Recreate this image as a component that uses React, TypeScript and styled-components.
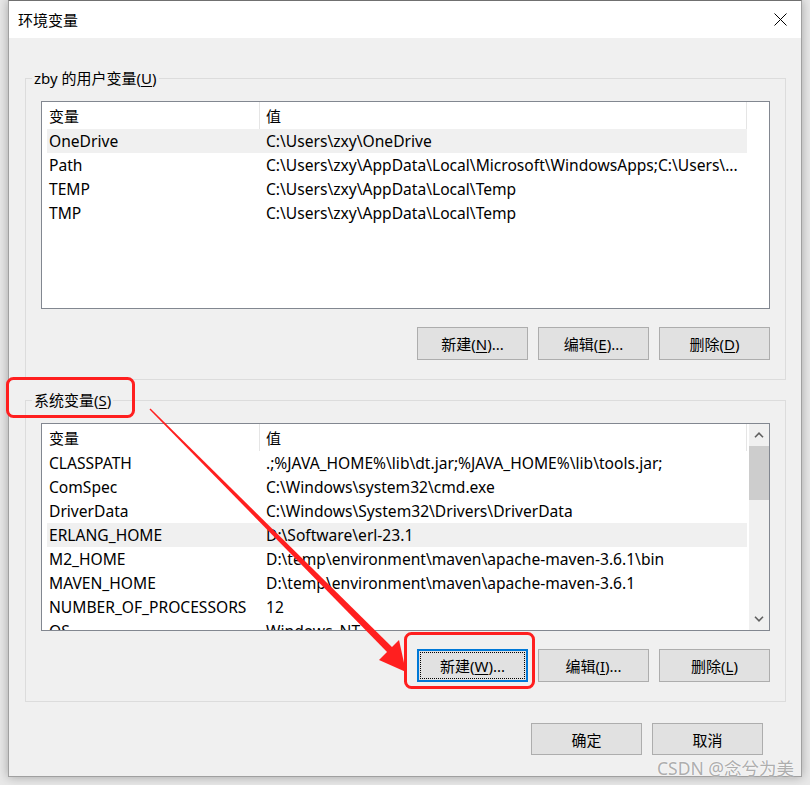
import * as React from "react";
import styled, { createGlobalStyle } from "styled-components";

const GlobalStyle = createGlobalStyle`
  body {
    margin: 0;
    font-family: "Noto Sans", "Noto Sans CJK SC", sans-serif;
    font-size: 15px;
    color: #000;
  }
  * {
    box-sizing: border-box;
  }
`;

const Screen = styled.div`
  position: relative;
  width: 810px;
  height: 785px;
  overflow: hidden;
  background: #e8e8e8;
  display: flex;
  padding-left: 8px;
`;

const Dialog = styled.div`
  width: 794px;
  height: 777px;
  background: #f0f0f0;
  border: 1px solid #a0a0a0;
  border-top-color: #707070;
  box-shadow: 0 0 10px rgba(0, 0, 0, 0.3);
  display: flex;
  flex-direction: column;
`;

const TitleBar = styled.div`
  height: 37px;
  background: #fff;
  display: flex;
  align-items: center;
  justify-content: space-between;
  padding-left: 9px;
  font-family: "Noto Sans CJK SC", sans-serif;
`;

const CloseButton = styled.div`
  width: 42px;
  height: 37px;
  display: flex;
  align-items: center;
  justify-content: center;
`;

const Body = styled.div`
  padding: 30px 15px 0 16px;
  display: flex;
  flex-direction: column;
`;

const GroupBox = styled.fieldset<{ $gap?: number }>`
  margin: ${(p) => p.$gap ?? 0}px 0 0;
  border: 1px solid #dcdcdc;
  padding: 13px 6px 19px;
  min-width: 0;
`;

const Legend = styled.legend`
  padding: 0 2px;
  line-height: 20px;
`;

const GroupInner = styled.div`
  padding: 0 9px;
  display: flex;
  flex-direction: column;
`;

const Key = styled.span`
  text-decoration: underline;
  text-underline-offset: 2px;
`;

const ListView = styled.div`
  height: 208px;
  border: 1px solid #828790;
  background: #fff;
  display: flex;
  overflow: hidden;
`;

const ListBody = styled.div`
  flex: 1;
  padding-left: 5px;
  display: flex;
  flex-direction: column;
  overflow: hidden;
`;

const HeaderRow = styled.div`
  height: 27px;
  flex: none;
  display: flex;
`;

const HeaderCell = styled.div<{ $w: number; $pad: number }>`
  width: ${(p) => p.$w}px;
  padding-left: ${(p) => p.$pad}px;
  border-right: 1px solid #e5e5e5;
  display: flex;
  align-items: center;
  font-family: "Noto Sans CJK SC", sans-serif;
`;

const Row = styled.div<{ $selected?: boolean }>`
  height: 24px;
  flex: none;
  width: 700px;
  display: flex;
  align-items: center;
  font-size: 15.6px;
  background: ${(p) => (p.$selected ? "#f0f0f0" : "transparent")};
  white-space: nowrap;
`;

const Cell = styled.div<{ $w: number; $pad: number }>`
  width: ${(p) => p.$w}px;
  padding-left: ${(p) => p.$pad}px;
  overflow: hidden;
`;

const ScrollBar = styled.div`
  width: 20px;
  flex: none;
  background: #f0f0f0;
  display: flex;
  flex-direction: column;
`;

const ScrollArrow = styled.div`
  height: 22px;
  display: flex;
  align-items: center;
  justify-content: center;
`;

const ScrollTrack = styled.div`
  flex: 1;
`;

const ScrollThumb = styled.div`
  height: 54px;
  background: #cdcdcd;
`;

const ButtonRow = styled.div<{ $pad?: number }>`
  display: flex;
  justify-content: flex-end;
  gap: 10px;
  margin-top: 18px;
  padding-right: ${(p) => p.$pad ?? 0}px;
`;

const Button = styled.div<{ $focused?: boolean; $h?: number }>`
  width: 111px;
  height: ${(p) => p.$h ?? 33}px;
  background: #e1e1e1;
  border: ${(p) => (p.$focused ? "2px solid #0078d7" : "1px solid #adadad")};
  outline: ${(p) => (p.$focused ? "1px dotted #000" : "none")};
  outline-offset: -4px;
  display: flex;
  align-items: center;
  justify-content: center;
  white-space: nowrap;
`;

const Footer = styled(ButtonRow)`
  margin-top: 21px;
`;

const Watermark = styled.div`
  position: absolute;
  left: 657px;
  top: 755px;
  font-size: 17.5px;
  color: rgba(140, 140, 140, 0.7);
  text-shadow: 0 0 2px #fff;
  white-space: nowrap;
`;

const Markup = styled.svg`
  position: absolute;
  left: 0;
  top: 0;
  pointer-events: none;
`;

type Item = { name: string; value: string; selected?: boolean };

const userVars: Item[] = [
  { name: "OneDrive", value: "C:\\Users\\zxy\\OneDrive", selected: true },
  {
    name: "Path",
    value: "C:\\Users\\zxy\\AppData\\Local\\Microsoft\\WindowsApps;C:\\Users\\...",
  },
  { name: "TEMP", value: "C:\\Users\\zxy\\AppData\\Local\\Temp" },
  { name: "TMP", value: "C:\\Users\\zxy\\AppData\\Local\\Temp" },
];

const systemVars: Item[] = [
  { name: "CLASSPATH", value: ".;%JAVA_HOME%\\lib\\dt.jar;%JAVA_HOME%\\lib\\tools.jar;" },
  { name: "ComSpec", value: "C:\\Windows\\system32\\cmd.exe" },
  { name: "DriverData", value: "C:\\Windows\\System32\\Drivers\\DriverData" },
  { name: "ERLANG_HOME", value: "D:\\Software\\erl-23.1", selected: true },
  { name: "M2_HOME", value: "D:\\temp\\environment\\maven\\apache-maven-3.6.1\\bin" },
  { name: "MAVEN_HOME", value: "D:\\temp\\environment\\maven\\apache-maven-3.6.1" },
  { name: "NUMBER_OF_PROCESSORS", value: "12" },
  { name: "OS", value: "Windows_NT" },
];

const Chevron: React.FC<{ up?: boolean }> = ({ up }) => (
  <svg width="10" height="6" viewBox="0 0 10 6">
    <path
      d={up ? "M1 5.2 L5 1.2 L9 5.2" : "M1 0.8 L5 4.8 L9 0.8"}
      fill="none"
      stroke="#606060"
      strokeWidth="1.6"
    />
  </svg>
);

const VarList: React.FC<{ items: Item[]; scroll?: boolean }> = ({ items, scroll }) => (
  <ListView>
    <ListBody>
      <HeaderRow>
        <HeaderCell $w={213} $pad={2}>变量</HeaderCell>
        <HeaderCell $w={487} $pad={6}>值</HeaderCell>
      </HeaderRow>
      {items.map((it) => (
        <Row key={it.name} $selected={it.selected}>
          <Cell $w={213} $pad={2}>{it.name}</Cell>
          <Cell $w={487} $pad={6}>{it.value}</Cell>
        </Row>
      ))}
    </ListBody>
    {scroll && (
      <ScrollBar>
        <ScrollArrow>
          <Chevron up />
        </ScrollArrow>
        <ScrollThumb />
        <ScrollTrack />
        <ScrollArrow>
          <Chevron />
        </ScrollArrow>
      </ScrollBar>
    )}
  </ListView>
);

export default function App() {
  return (
    <>
      <GlobalStyle />
      <Screen>
        <Dialog>
          <TitleBar>
            环境变量
            <CloseButton>
              <svg width="13" height="13" viewBox="0 0 13 13">
                <path d="M0.5 0.5 L12.5 12.5 M12.5 0.5 L0.5 12.5" stroke="#000" strokeWidth="1" />
              </svg>
            </CloseButton>
          </TitleBar>
          <Body>
            <GroupBox>
              <Legend>
                zby 的用户变量(<Key>U</Key>)
              </Legend>
              <GroupInner>
                <VarList items={userVars} />
                <ButtonRow>
                  <Button>
                    新建(<Key>N</Key>)...
                  </Button>
                  <Button>
                    编辑(<Key>E</Key>)...
                  </Button>
                  <Button>
                    删除(<Key>D</Key>)
                  </Button>
                </ButtonRow>
              </GroupInner>
            </GroupBox>
            <GroupBox $gap={10}>
              <Legend>
                系统变量(<Key>S</Key>)
              </Legend>
              <GroupInner>
                <VarList items={systemVars} scroll />
                <ButtonRow>
                  <Button $focused>
                    新建(<Key>W</Key>)...
                  </Button>
                  <Button>
                    编辑(<Key>I</Key>)...
                  </Button>
                  <Button>
                    删除(<Key>L</Key>)
                  </Button>
                </ButtonRow>
              </GroupInner>
            </GroupBox>
            <Footer $pad={23}>
              <Button $h={32}>确定</Button>
              <Button $h={32}>取消</Button>
            </Footer>
          </Body>
        </Dialog>
        <Watermark>CSDN @念兮为美</Watermark>
        <Markup width="810" height="785" viewBox="0 0 810 785">
          <rect x="7.5" y="378.5" width="126" height="38" rx="6" fill="none" stroke="#ff1f1f" strokeWidth="3" />
          <rect x="405.5" y="633.5" width="128" height="54" rx="6" fill="none" stroke="#ff1f1f" strokeWidth="3" />
          <polygon points="149.5,409.5 150.5,408.5 394.5,649.5 389.5,654.5" fill="#ff1f1f" />
          <polygon points="406,672 379,660 399,640" fill="#ff1f1f" />
        </Markup>
      </Screen>
    </>
  );
}
